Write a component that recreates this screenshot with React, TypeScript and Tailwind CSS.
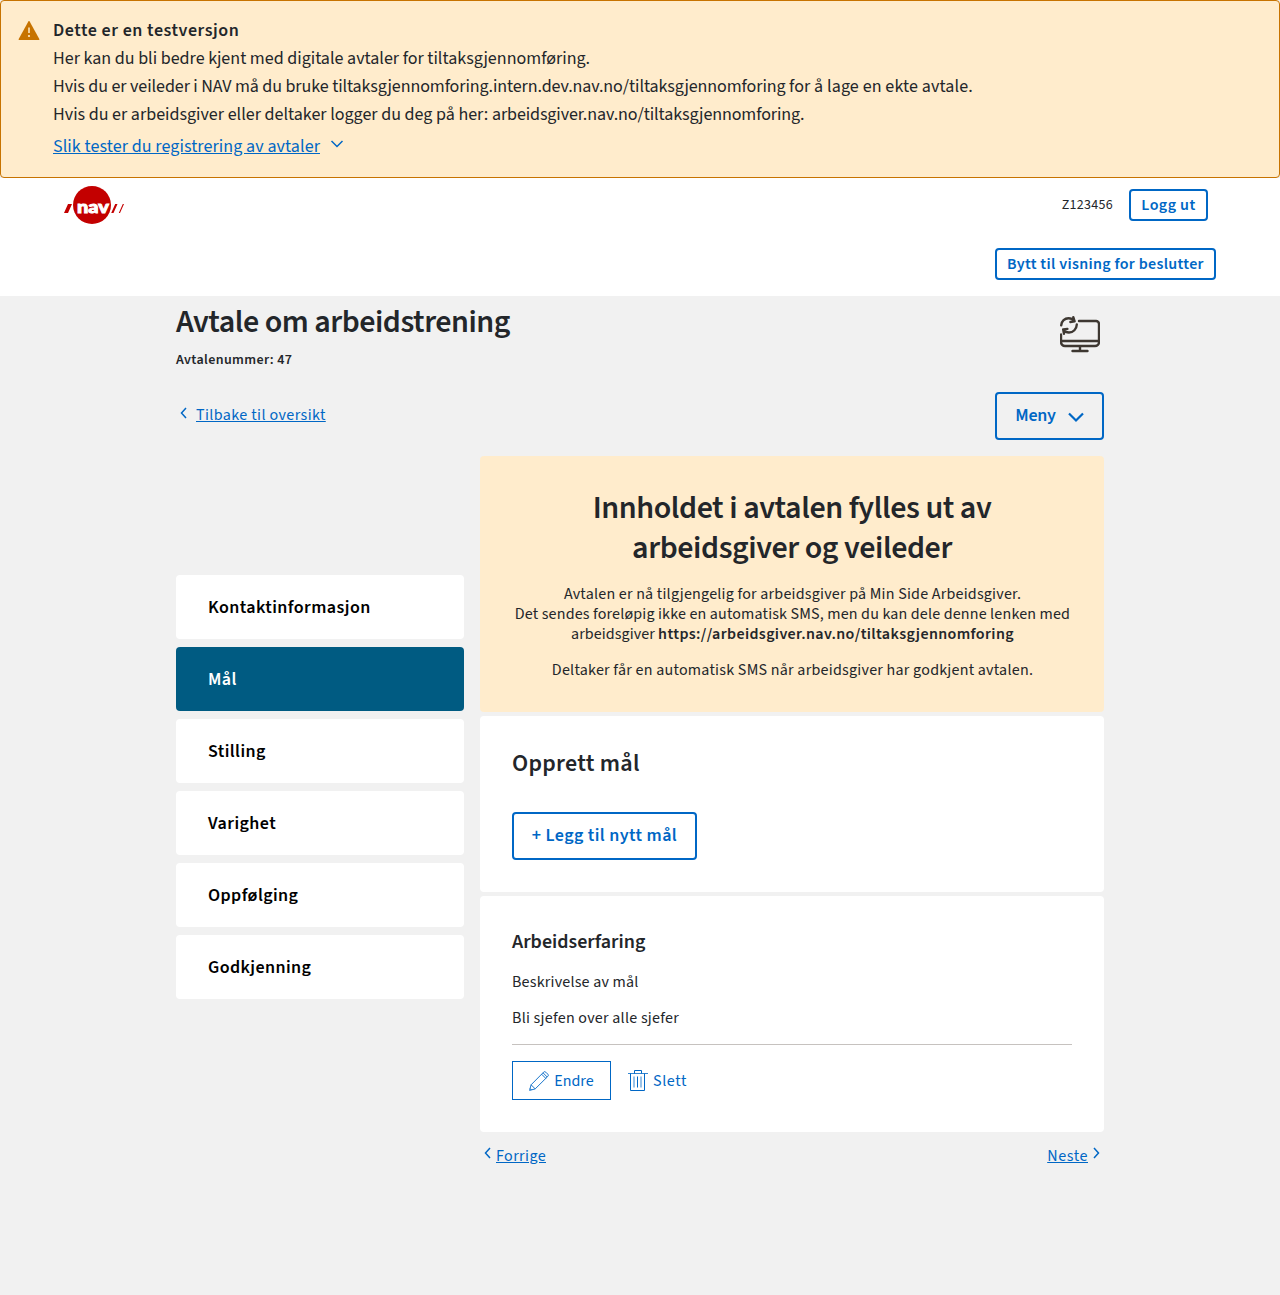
import type { ReactNode } from 'react';

const steps = ['Kontaktinformasjon', 'Mål', 'Stilling', 'Varighet', 'Oppfølging', 'Godkjenning'];

function Chevron({ d, className }: { d: string; className: string }) {
  return (
    <svg viewBox="0 0 16 16" className={className} fill="none" stroke="currentColor" strokeWidth="1.5">
      <path d={d} />
    </svg>
  );
}

function WarningIcon() {
  return (
    <svg viewBox="0 0 24 24" className="size-6 shrink-0">
      <path d="M12 2c.3 0 .5.200.65.400l9.650 17.600c.25.500 0 1-.5 1H2.200c-.5 0-.750-.5-.5-1L11.350 2.400c.150-.2.350-.4.650-.4Z" fill="#c77300" />
      <path d="M12 8.500v5.500" stroke="#ffeccc" strokeWidth="1.500" />
      <circle cx="12" cy="17" r="1.100" fill="#ffeccc" />
    </svg>
  );
}

function NavLogo() {
  return (
    <svg viewBox="0 0 60 38" className="h-[38px] w-[60px]" fill="#c30000">
      <circle cx="28" cy="19" r="19" />
      <path d="M4 18h4L4 27H0zM51.200 18h2.300l-4 9h-2.300zM58.800 18h1.200l-4 9h-1.200z" />
      <text
        x="13"
        y="27.300"
        fill="#fff"
        stroke="#fff"
        strokeWidth="0.900"
        fontSize="17"
        fontWeight="900"
        textLength="32"
        lengthAdjust="spacingAndGlyphs"
        fontFamily="Lato, sans-serif"
      >
        nav
      </text>
    </svg>
  );
}

function SyncScreenIcon() {
  return (
    <svg viewBox="0 0 40 38" className="h-[38px] w-10" fill="none" stroke="#3e3832" strokeWidth="2.400" strokeLinecap="round" strokeLinejoin="round">
      <path d="M19 6h17a3 3 0 0 1 3 3v18a4 4 0 0 1-4 4H5a4 4 0 0 1-4-4v-7.500M1 26h38M20 31v5M12.500 36h15" />
      <path d="M1.200 10.300C1.500 6 4.800 3.200 8.500 3.200c2.500 0 4.500 1 5.800 2.600M13.300 2.200l1.300 4.100-4.200.7M16.800 9.500c-.2 4.700-3.600 8-7.800 8-2.300 0-4.200-.9-5.500-2.700M4 18.700l-.800-4.200 4.200-.6" />
    </svg>
  );
}

function PencilIcon() {
  return (
    <svg viewBox="0 0 20 20" className="size-5" fill="none" stroke="currentColor" strokeWidth="0.900">
      <path d="M.6 19.400l1.500-5.600L14.600 1.200a1.500 1.500 0 0 1 2.200 0l2 2a1.500 1.500 0 0 1 0 2.200L6.200 17.900zM2.100 13.800l4.100 4.100M12.600 3.200l4.200 4.200M14 1.800L18.200 6M1 17.500L2.500 19" />
    </svg>
  );
}

function TrashIcon() {
  return (
    <svg viewBox="0 0 20 22" className="h-[22px] w-5" fill="none" stroke="currentColor" strokeWidth="1">
      <path d="M2.500 3.500v17h14v-17M6.500 3.500v-3h7v3M9.500 6.500v11" />
      <path d="M0 3.500h20M6 6.500v11M13 6.500v11" strokeWidth="0.800" />
    </svg>
  );
}

function OutlineButton({ children, className }: { children: ReactNode; className: string }) {
  return (
    <button className={`flex items-center justify-center rounded border-2 border-[#0067c5] font-semibold whitespace-nowrap text-[#0067c5] ${className}`}>
      {children}
    </button>
  );
}

function Heading() {
  return (
    <div className="flex h-24 justify-between">
      <div className="pt-1.5">
        <h1 className="text-[32px] leading-10 font-semibold tracking-[-0.48px]">Avtale om arbeidstrening</h1>
        <p className="mt-2 text-sm leading-5 font-semibold tracking-[0.38px]">Avtalenummer: 47</p>
      </div>
      <div className="pt-[19px] pr-1">
        <SyncScreenIcon />
      </div>
    </div>
  );
}

export default function App() {
  return (
    <div className="min-h-[1295px] bg-[#f1f1f1] font-['Source_Sans_3','Noto_Sans_CJK_SC',sans-serif] text-base leading-5 text-[#23262a]">
      <section className="flex h-[178px] gap-3 rounded border border-[#c77300] bg-[#ffeccc] p-4 text-lg leading-7">
        <div className="pt-0.5">
          <WarningIcon />
        </div>
        <div>
          <h2 className="font-semibold tracking-[0.55px]">Dette er en testversjon</h2>
          <p>Her kan du bli bedre kjent med digitale avtaler for tiltaksgjennomføring.</p>
          <p>
            <span className="tracking-[-0.075px]">Hvis du er veileder i NAV må du bruke </span>
            <span className="tracking-[-0.095px]">tiltaksgjennomforing.intern.dev.nav.no/tiltaksgjennomforing </span>
            <span className="tracking-[0.12px]">for å lage en ekte avtale.</span>
          </p>
          <p>
            Hvis du er arbeidsgiver eller deltaker logger du deg på her:{' '}
            <span className="tracking-[-0.1px]">arbeidsgiver.nav.no/tiltaksgjennomforing.</span>
          </p>
          <a className="mt-1 flex items-center gap-[9px] text-[#0067c5]">
            <span className="tracking-[0.08px] underline">Slik tester du registrering av avtaler</span>
            <Chevron d="M2.500 5L8 10.500L13.500 5" className="mb-1.5 size-4" />
          </a>
        </div>
      </section>

      <header className="h-[118px] bg-white px-16">
        <div className="flex h-[54px] items-center justify-between pr-2">
          <NavLogo />
          <div className="flex items-center gap-4">
            <span className="text-sm tracking-[0.28px]">Z123456</span>
            <OutlineButton className="h-8 w-[79px] tracking-[0.45px]">Logg ut</OutlineButton>
          </div>
        </div>
        <div className="flex justify-end pt-4">
          <OutlineButton className="h-8 w-[221px] tracking-[0.33px]">Bytt til visning for beslutter</OutlineButton>
        </div>
      </header>

      <main className="mx-auto w-[928px]">
        <Heading />
        <div className="flex h-12 items-center justify-between">
          <a className="mb-0.5 flex items-center gap-1 text-[#0067c5]">
            <Chevron d="M10 3L5.500 8L10 13" className="mb-1 size-4" />
            <span className="tracking-[0.4px] underline">Tilbake til oversikt</span>
          </a>
          <OutlineButton className="h-12 w-[109px] gap-3 text-lg tracking-[-0.3px]">
            Meny
            <svg viewBox="0 0 16 16" className="mt-0.5 size-4" fill="none" stroke="currentColor" strokeWidth="2.200">
              <path d="M1 4.500L8 11.500L15 4.500" />
            </svg>
          </OutlineButton>
        </div>

        <div className="mt-4 flex gap-4">
          <nav className="mt-[119px] flex w-72 flex-col gap-2">
            {steps.map((step) => (
              <a
                key={step}
                className={`flex h-16 items-center rounded px-8 pt-0.5 text-lg font-semibold tracking-[0.42px] ${step === 'Mål' ? 'bg-[#005b82] text-white' : 'bg-white text-black'}`}
              >
                {step}
              </a>
            ))}
          </nav>

          <div className="flex w-[624px] flex-col gap-1">
            <section className="h-64 rounded bg-[#ffeccc] px-8 pt-8 text-center">
              <h2 className="mx-auto w-[480px] text-[32px] leading-10 font-semibold tracking-[-0.43px]">
                Innholdet i avtalen fylles ut av arbeidsgiver og veileder
              </h2>
              <p className="mt-4 pl-px tracking-[0.165px] whitespace-nowrap">
                <span className="tracking-[0.22px]">Avtalen er nå tilgjengelig for arbeidsgiver på Min Side Arbeidsgiver.</span>
                <br />
                Det sendes foreløpig ikke en automatisk SMS, men du kan dele denne lenken med
                <br />
                <span className="tracking-[0.08px]">arbeidsgiver </span>
                <b className="font-semibold tracking-[0.37px]">https://arbeidsgiver.nav.no/tiltaksgjennomforing</b>
              </p>
              <p className="mt-4 pl-px tracking-[0.25px]">Deltaker får en automatisk SMS når arbeidsgiver har godkjent avtalen.</p>
            </section>

            <section className="h-44 rounded bg-white p-8">
              <h2 className="text-2xl leading-8 font-semibold tracking-[0.28px]">Opprett mål</h2>
              <OutlineButton className="mt-8 h-12 w-[185px] text-lg tracking-[0.43px]">+ Legg til nytt mål</OutlineButton>
            </section>

            <section className="h-[236px] rounded bg-white p-8">
              <h3 className="text-xl leading-7 font-semibold">Arbeidserfaring</h3>
              <p className="mt-4 tracking-[0.2px]">Beskrivelse av mål</p>
              <p className="mt-4 tracking-[0.25px]">Bli sjefen over alle sjefer</p>
              <hr className="mt-4 border-[#c6c2bf]" />
              <div className="mt-4 flex items-center text-[#0067c5]">
                <button className="flex h-[39px] w-[99px] items-center justify-center gap-[5px] border border-[#0067c5]">
                  <PencilIcon />
                  Endre
                </button>
                <button className="ml-[17px] flex items-center gap-[5px] tracking-[0.6px]">
                  <TrashIcon />
                  Slett
                </button>
              </div>
            </section>

            <div className="mt-[9px] flex justify-between text-[#0067c5]">
              <a className="flex items-center">
                <Chevron d="M10 3L5.500 8L10 13" className="mb-1.5 size-4" />
                <span className="tracking-[0.4px] underline">Forrige</span>
              </a>
              <a className="flex items-center">
                <span className="tracking-[0.6px] underline">Neste</span>
                <Chevron d="M6 3L10.500 8L6 13" className="mb-1.5 size-4" />
              </a>
            </div>
          </div>
        </div>
      </main>
    </div>
  );
}
